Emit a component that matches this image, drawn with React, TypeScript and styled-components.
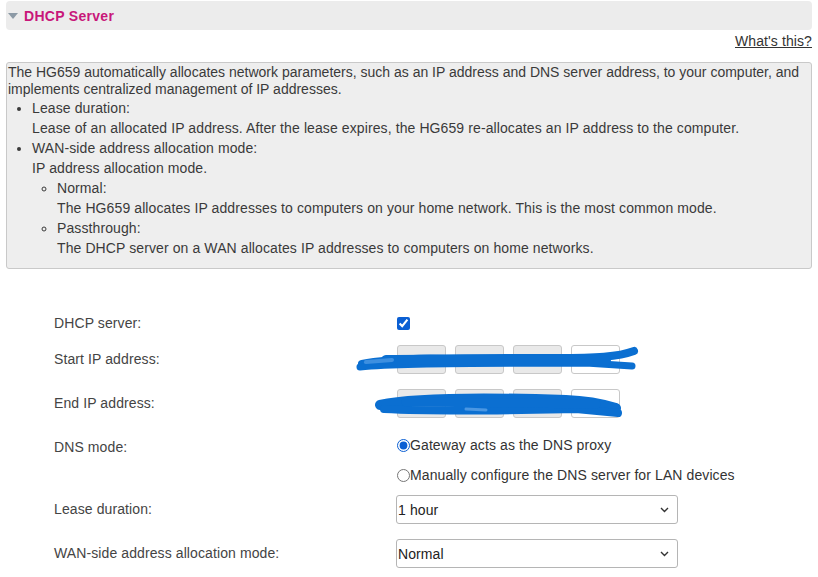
import styled, { createGlobalStyle } from "styled-components"

const Global = createGlobalStyle`
  body {
    margin: 0;
    background: #fff;
    font-family: "Liberation Sans", Arial, sans-serif;
    font-size: 14px;
    color: #333;
  }
`

const Page = styled.div`
  width: 818px;
  padding: 1px 6px 0 6px;
  box-sizing: border-box;
`

const Header = styled.div`
  height: 29px;
  background: #ececec;
  border-radius: 4px;
  display: flex;
  align-items: center;
  padding-left: 2px;
  gap: 6px;
`

const Arrow = styled.span`
  width: 0;
  height: 0;
  border-left: 5px solid transparent;
  border-right: 5px solid transparent;
  border-top: 6px solid #8c9aa6;
  margin-top: 1px;
`

const Title = styled.span`
  font-weight: bold;
  font-size: 14px;
  letter-spacing: 0.3px;
  color: #c8177a;
`

const HelpRow = styled.div`
  display: flex;
  justify-content: flex-end;
  line-height: 17px;
  margin: 3px 0 12px;
`

const Help = styled.a`
  color: #333;
  text-decoration: underline;
  letter-spacing: 0.1px;
  cursor: pointer;
`

const InfoBox = styled.div`
  background: #eeeeee;
  border: 1px solid #c9c9c9;
  border-radius: 3px;
  padding: 1px 2px 10px 1px;
  letter-spacing: 0.1px;
  color: #3a3a3a;
`

const Intro = styled.p`
  margin: 0;
  line-height: 17px;
  letter-spacing: 0;
`

const List = styled.ul<{ nested?: boolean }>`
  margin: 0;
  padding-left: ${({ nested }) => (nested ? "25px" : "24px")};
  list-style: ${({ nested }) => (nested ? "circle" : "disc")};
  line-height: 20px;
`

const Item = styled.li``

const Desc = styled.div``

const Form = styled.div`
  display: flex;
  flex-direction: column;
  padding-left: 48px;
  margin-top: 39px;
  letter-spacing: 0.1px;
`

const Row = styled.div<{ space?: number; top?: boolean }>`
  display: grid;
  grid-template-columns: 342px 1fr;
  align-items: ${({ top }) => (top ? "start" : "center")};
  margin-top: ${({ space }) => space ?? 0}px;
`

const Label = styled.div<{ pad?: number }>`
  color: #444;
  line-height: 17px;
  padding-top: ${({ pad }) => pad ?? 0}px;
`

const Check = styled.input`
  margin: 0 0 0 1px;
  width: 13px;
  height: 13px;
  accent-color: #0b5fd3;
`

const CheckCell = styled.div`
  height: 30px;
  display: flex;
  align-items: center;
`

const IpGroup = styled.div`
  position: relative;
  display: flex;
  gap: 9px;
  padding-left: 1px;
`

const Octet = styled.input<{ off?: boolean }>`
  width: 49px;
  height: 29px;
  box-sizing: border-box;
  border: 1px solid #c8c8c8;
  border-radius: 3px;
  background: ${({ off }) => (off ? "#e9e9e9" : "#fff")};
  font: 14px "Liberation Sans", Arial, sans-serif;
  padding: 0 4px;
`

const Scribble = styled.svg`
  position: absolute;
  left: -40px;
  top: 0;
  pointer-events: none;
`

const Radios = styled.div`
  display: flex;
  flex-direction: column;
`

const RadioLine = styled.label`
  height: 30px;
  display: flex;
  align-items: center;
  color: #333;
`

const Radio = styled.input`
  margin: 0 0 0 1px;
  width: 13px;
  height: 13px;
  accent-color: #0b5fd3;
`

const SelectBox = styled.div`
  position: relative;
  width: 282px;
  height: 29px;
`

const Select = styled.select`
  appearance: none;
  width: 100%;
  height: 100%;
  border: 1px solid #b5b5b5;
  border-radius: 3px;
  background: #fff;
  font: 14px "Liberation Sans", Arial, sans-serif;
  letter-spacing: 0.1px;
  color: #222;
  padding: 0 0 0 1px;
`

const Chevron = styled.svg`
  position: absolute;
  right: 9px;
  top: 12px;
  pointer-events: none;
`

const ScribbleStart = () => (
  <Scribble width="290" height="30" viewBox="0 0 290 30">
    <g fill="none" stroke="#0b6fd1" strokeLinecap="round" strokeLinejoin="round">
      <path d="M6 19 C40 12 120 13 200 13 C240 13 262 12 278 6" strokeWidth="8" />
      <path d="M4 22 C60 17 150 19 230 18 L276 21" strokeWidth="7" />
      <path d="M30 15 C100 14 180 16 250 16" strokeWidth="10" />
      <path d="M10 17 L36 15" strokeWidth="4" stroke="#3d8fe0" />
    </g>
  </Scribble>
)

const ScribbleEnd = () => (
  <Scribble width="290" height="30" viewBox="0 0 290 30">
    <g fill="none" stroke="#0b6fd1" strokeLinecap="round" strokeLinejoin="round">
      <path d="M24 16 C60 8 150 9 210 11 C235 12 250 16 260 19" strokeWidth="10" />
      <path d="M28 20 C90 23 170 21 220 20 L262 24" strokeWidth="8" />
      <path d="M50 13 C120 14 190 15 240 15" strokeWidth="9" />
      <path d="M110 20 L130 21" strokeWidth="3" stroke="#4a97e3" />
    </g>
  </Scribble>
)

const Caret = () => (
  <Chevron width="9" height="6" viewBox="0 0 9 6">
    <path d="M1 1 L4.5 4.5 L8 1" fill="none" stroke="#333" strokeWidth="1.4" />
  </Chevron>
)

const App = () => {
  return (
    <Page>
      <Global />
      <Header>
        <Arrow />
        <Title>DHCP Server</Title>
      </Header>
      <HelpRow>
        <Help>What's this?</Help>
      </HelpRow>
      <InfoBox>
        <Intro>
          The HG659 automatically allocates network parameters, such as an IP address and DNS server address, to your
          computer, and implements centralized management of IP addresses.
        </Intro>
        <List>
          <Item>
            Lease duration:
            <Desc>Lease of an allocated IP address. After the lease expires, the HG659 re-allocates an IP address to the computer.</Desc>
          </Item>
          <Item>
            WAN-side address allocation mode:
            <Desc>IP address allocation mode.</Desc>
            <List nested>
              <Item>
                Normal:
                <Desc>The HG659 allocates IP addresses to computers on your home network. This is the most common mode.</Desc>
              </Item>
              <Item>
                Passthrough:
                <Desc>The DHCP server on a WAN allocates IP addresses to computers on home networks.</Desc>
              </Item>
            </List>
          </Item>
        </List>
      </InfoBox>

      <Form>
        <Row>
          <Label>DHCP server:</Label>
          <CheckCell>
            <Check type="checkbox" defaultChecked />
          </CheckCell>
        </Row>
        <Row space={7}>
          <Label>Start IP address:</Label>
          <IpGroup>
            <Octet off readOnly />
            <Octet off readOnly />
            <Octet off readOnly />
            <Octet readOnly />
            <ScribbleStart />
          </IpGroup>
        </Row>
        <Row space={15}>
          <Label>End IP address:</Label>
          <IpGroup>
            <Octet off readOnly />
            <Octet off readOnly />
            <Octet off readOnly />
            <Octet readOnly />
            <ScribbleEnd />
          </IpGroup>
        </Row>
        <Row space={12} top>
          <Label pad={9}>DNS mode:</Label>
          <Radios>
            <RadioLine>
              <Radio type="radio" name="dns" defaultChecked />
              Gateway acts as the DNS proxy
            </RadioLine>
            <RadioLine>
              <Radio type="radio" name="dns" />
              Manually configure the DNS server for LAN devices
            </RadioLine>
          </Radios>
        </Row>
        <Row space={5}>
          <Label>Lease duration:</Label>
          <SelectBox>
            <Select defaultValue="1">
              <option value="1">1 hour</option>
            </Select>
            <Caret />
          </SelectBox>
        </Row>
        <Row space={15}>
          <Label>WAN-side address allocation mode:</Label>
          <SelectBox>
            <Select defaultValue="n">
              <option value="n">Normal</option>
            </Select>
            <Caret />
          </SelectBox>
        </Row>
      </Form>
    </Page>
  )
}

export default App
